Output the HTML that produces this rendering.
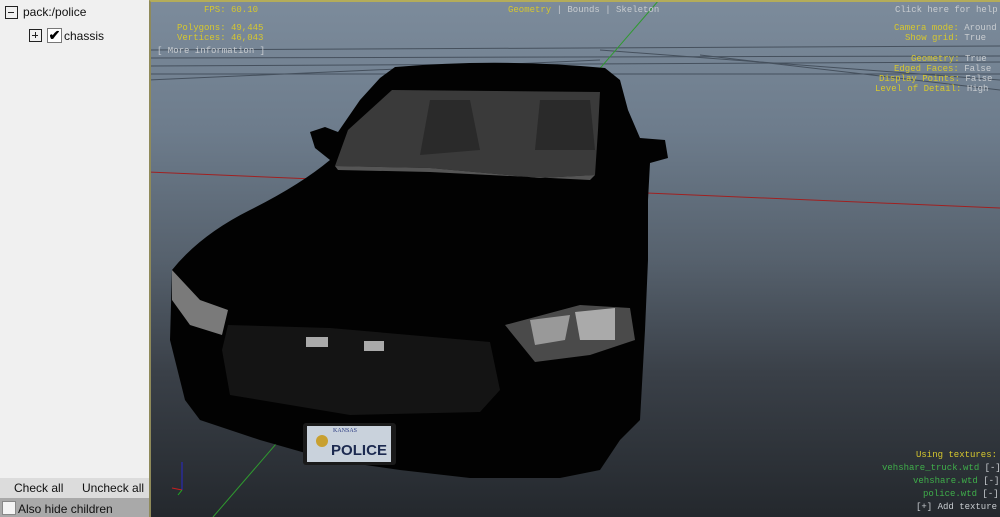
<!DOCTYPE html>
<html><head><meta charset="utf-8"><style>
*{margin:0;padding:0;box-sizing:border-box}
body{width:1000px;height:517px;overflow:hidden;position:relative;background:#222;font-family:"Liberation Sans",sans-serif}
#left{position:absolute;left:0;top:0;width:149px;height:517px;background:#f0f0f0}
#vp{position:absolute;left:149px;top:0;width:851px;height:517px;border-left:2px solid #8f8a5a;border-top:2px solid #b4ac5a;background:linear-gradient(#7c8b9b 0%,#6d7c8c 25%,#56616d 50%,#3a4048 72%,#24282d 100%);overflow:hidden}
.m{position:absolute;font-family:"Liberation Mono",monospace;font-size:9px;color:#d6c72e;white-space:pre;line-height:10px}
.w{color:#c8ccd0}
.g{color:#3fae4a}
.lt{position:absolute;font-size:12px;color:#111}
.bx{position:absolute;width:13px;height:13px;border:1.5px solid #222}
</style></head><body>
<div id="left">
 <div class="bx" style="left:5px;top:6px"><div style="position:absolute;left:2px;top:4.5px;width:6px;height:1.5px;background:#222"></div></div>
 <div class="lt" style="left:23px;top:5px">pack:/police</div>
 <div class="bx" style="left:29px;top:29px"><div style="position:absolute;left:2px;top:4.5px;width:6px;height:1.5px;background:#222"></div><div style="position:absolute;left:4.5px;top:2px;width:1.5px;height:6px;background:#222"></div></div>
 <div style="position:absolute;left:47px;top:28px;width:15px;height:15px;border:1px solid #777;background:#fff;font-size:14px;line-height:13px;text-align:center;font-weight:bold">✔</div>
 <div class="lt" style="left:64px;top:29px">chassis</div>
 <div style="position:absolute;left:0;top:478px;width:149px;height:20px;background:#dcdcdc"></div>
 <div class="lt" style="left:14px;top:481px">Check all</div>
 <div class="lt" style="left:82px;top:481px">Uncheck all</div>
 <div style="position:absolute;left:0;top:498px;width:149px;height:19px;background:#a9a9a9"></div>
 <div style="position:absolute;left:2px;top:501px;width:14px;height:14px;background:#f4f4f4;border:1px solid #888"></div>
 <div class="lt" style="left:18px;top:502px">Also hide children</div>
</div>
<div id="vp">
<svg width="851" height="517" style="position:absolute;left:-2px;top:-2px" viewBox="149 0 851 517">
 <g stroke="#3a4450" stroke-width="1" fill="none" opacity=".8">
  <line x1="149" y1="50" x2="1000" y2="46"/><line x1="149" y1="58" x2="1000" y2="56"/><line x1="149" y1="66" x2="1000" y2="62"/>
  <line x1="149" y1="80" x2="600" y2="60"/><line x1="600" y1="50" x2="1000" y2="80"/><line x1="700" y1="55" x2="1000" y2="90"/>
  <line x1="149" y1="74" x2="1000" y2="74"/>
 </g>
 <line x1="149" y1="172" x2="1000" y2="208" stroke="#a02020" stroke-width="1"/>
 <line x1="659" y1="0" x2="213" y2="517" stroke="#2f9a2f" stroke-width="1"/>
 <path d="M395,67 Q500,58 605,68 L620,80 L628,110 L640,138 L665,140 L668,158 L650,163 L648,200 L648,260 L645,330 L640,420 L620,440 L600,470 L560,478 L470,478 L400,470 L330,460 L260,440 L200,420 L185,400 L170,340 L172,270 Q200,235 250,210 Q300,185 330,160 L315,148 L310,132 L325,127 L338,132 L360,100 L380,78 Z" fill="#020202"/>
 <path d="M392,90 L600,92 L598,130 L595,175 L540,178 L430,168 L335,166 L348,130 Z" fill="#3a3a3a"/>
 <path d="M430,100 L470,100 L480,150 L420,155 Z" fill="#2a2a2a"/>
 <path d="M540,100 L590,100 L595,150 L535,150 Z" fill="#2a2a2a"/>
 <path d="M335,166 L430,168 L540,178 L595,175 L590,180 L430,172 L338,170Z" fill="#555"/>
 <path d="M172,270 L200,300 L228,310 L222,335 L190,325 L172,300 Z" fill="#7a7a7a"/>
 <path d="M505,325 L580,305 L630,308 L635,340 L590,355 L535,362 Z" fill="#4a4a4a"/>
 <path d="M530,320 L570,315 L565,340 L535,345Z" fill="#999"/><path d="M575,312 L615,308 L615,340 L580,340Z" fill="#aaa"/>
 <path d="M228,325 L330,328 L490,342 L500,390 L480,412 L350,415 L230,395 L222,350 Z" fill="#141414"/>
 <rect x="306" y="337" width="22" height="10" fill="#aaa"/><rect x="364" y="341" width="20" height="10" fill="#aaa"/>
 <rect x="303" y="423" width="93" height="42" rx="3" fill="#1a1a1a"/>
 <rect x="307" y="426" width="84" height="36" fill="#c9d2dc"/>
 <circle cx="322" cy="441" r="6" fill="#c8a030"/>
 <text x="331" y="455" font-family="Liberation Sans,sans-serif" font-size="15" font-weight="bold" fill="#1c2a50" textLength="56" lengthAdjust="spacingAndGlyphs">POLICE</text>
 <text x="333" y="432" font-family="Liberation Serif,serif" font-size="6" fill="#2a3a80">KANSAS</text>
 <line x1="182" y1="490" x2="182" y2="462" stroke="#2828c8"/><line x1="172" y1="488" x2="182" y2="490" stroke="#c82020"/><line x1="182" y1="490" x2="178" y2="495" stroke="#20b020"/>
</svg>
<div class="m" style="left:53px;top:3px">FPS: 60.10</div>
<div class="m" style="left:26px;top:21px">Polygons: 49,445</div>
<div class="m" style="left:26px;top:31px">Vertices: 46,043</div>
<div class="m w" style="left:6px;top:44px">[ More information ]</div>
<div class="m" style="left:357px;top:3px">Geometry <span class="w">| Bounds | Skeleton</span></div>
<div class="m w" style="left:744px;top:3px">Click here for help</div>
<div class="m" style="left:743px;top:21px">Camera mode: <span class="w">Around</span></div>
<div class="m" style="left:754px;top:31px">Show grid: <span class="w">True</span></div>
<div class="m" style="left:760px;top:52px">Geometry: <span class="w">True</span></div>
<div class="m" style="left:743px;top:62px">Edged Faces: <span class="w">False</span></div>
<div class="m" style="left:728px;top:72px">Display Points: <span class="w">False</span></div>
<div class="m" style="left:724px;top:82px">Level of Detail: <span class="w">High</span></div>
<div class="m" style="left:765px;top:448px">Using textures:</div>
<div class="m g" style="left:731px;top:461px">vehshare_truck.wtd <span class="w">[-]</span></div>
<div class="m g" style="left:762px;top:474px">vehshare.wtd <span class="w">[-]</span></div>
<div class="m g" style="left:772px;top:487px">police.wtd <span class="w">[-]</span></div>
<div class="m w" style="left:765px;top:500px">[+] Add texture</div>
</div>
</body></html>
